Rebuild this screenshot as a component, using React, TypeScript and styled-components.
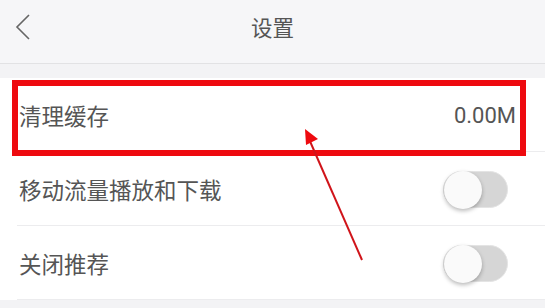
import React from "react";
import styled, { createGlobalStyle } from "styled-components";

const GlobalStyle = createGlobalStyle`
  html, body {
    margin: 0;
    padding: 0;
    background: #f3f3f5;
  }
  body {
    font-family: "Noto Sans CJK SC", "Noto Sans", sans-serif;
  }
`;

const Screen = styled.div`
  position: relative;
  width: 545px;
  height: 308px;
  overflow: hidden;
  background: #f3f3f5;
`;

const Header = styled.header`
  height: 63px;
  display: flex;
  align-items: center;
  justify-content: center;
  position: relative;
  background: #f6f6f8;
  border-bottom: 1px solid #e2e2e4;
`;

const BackButton = styled.div`
  position: absolute;
  left: 14px;
  top: 13px;
  width: 20px;
  height: 30px;
`;

const Title = styled.h1`
  margin: 0;
  font-size: 21.5px;
  font-weight: 400;
  color: #555;
  line-height: 1;
  margin-top: -9px;
`;

const List = styled.div`
  margin-top: 14px;
  background: #fff;
`;

const Row = styled.div<{ $pr: number }>`
  height: 74px;
  display: flex;
  align-items: center;
  justify-content: space-between;
  padding: 0 ${(p) => p.$pr}px 0 19px;
  position: relative;

  &::after {
    content: "";
    position: absolute;
    left: 17px;
    right: 0;
    bottom: 0;
    height: 1px;
    background: #ececee;
  }
`;

const Label = styled.span`
  font-size: 22.5px;
  color: #555;
  line-height: 1;
`;

const Value = styled.span`
  font-family: "Roboto", "Noto Sans", sans-serif;
  font-size: 22px;
  color: #555;
`;

const Track = styled.div`
  width: 65px;
  height: 37px;
  border-radius: 19px;
  background: #d6d6d6;
  border: 1px solid #e4e4e4;
  box-sizing: border-box;
  position: relative;
`;

const Knob = styled.div`
  position: absolute;
  left: 0;
  top: -1px;
  width: 38px;
  height: 38px;
  border-radius: 50%;
  background: #fafafa;
  box-shadow: 0 2px 4px rgba(0, 0, 0, 0.28);
`;

const Highlight = styled.div`
  position: absolute;
  left: 12px;
  top: 80px;
  width: 514px;
  height: 76px;
  box-sizing: border-box;
  border: 6px solid #ee0a0f;
  pointer-events: none;
`;

const Arrow = styled.svg`
  position: absolute;
  left: 0;
  top: 0;
  pointer-events: none;
`;

function Toggle() {
  return (
    <Track>
      <Knob />
    </Track>
  );
}

export default function App() {
  return (
    <>
      <GlobalStyle />
      <Screen>
        <Header>
          <BackButton>
            <svg width="20" height="30" viewBox="0 0 20 30">
              <polyline
                points="15,2 3,14 15,26"
                fill="none"
                stroke="#666"
                strokeWidth="1.6"
              />
            </svg>
          </BackButton>
          <Title>设置</Title>
        </Header>
        <List>
          <Row $pr={29}>
            <Label>清理缓存</Label>
            <Value>0.00M</Value>
          </Row>
          <Row $pr={37}>
            <Label>移动流量播放和下载</Label>
            <Toggle />
          </Row>
          <Row $pr={37}>
            <Label>关闭推荐</Label>
            <Toggle />
          </Row>
        </List>
        <Highlight />
        <Arrow width="545" height="308" viewBox="0 0 545 308">
          <line x1="362" y1="260" x2="309" y2="139" stroke="#d0141a" strokeWidth="2" />
          <polygon points="305,129 318,139 306,145" fill="#ee0a0f" />
        </Arrow>
      </Screen>
    </>
  );
}
